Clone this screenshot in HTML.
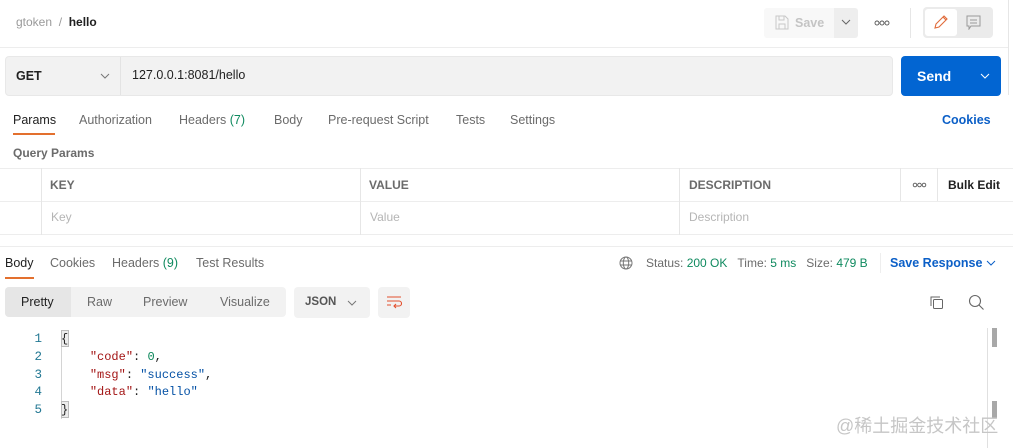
<!DOCTYPE html>
<html><head><meta charset="utf-8">
<style>
*{margin:0;padding:0;box-sizing:border-box}
body{width:1013px;height:448px;overflow:hidden;background:#fff;font-family:"Liberation Sans","Noto Sans CJK SC",sans-serif;font-size:12px;color:#6b6b6b;position:relative}
.a{position:absolute;white-space:nowrap}
.hl{position:absolute;background:#ededed;height:1px}
.vl{position:absolute;background:#e6e6e6;width:1px}
.mono{font-family:"Liberation Mono","DejaVu Sans Mono",monospace;font-size:12px}
.g{color:#0f8a5f}
</style></head><body>
<div class="a" style="left:16px;top:15px;font-size:12px;color:#9a9a9a">gtoken&nbsp;&nbsp;/&nbsp;&nbsp;<span style="color:#212121;font-weight:bold">hello</span></div>
<div class="hl" style="left:0;top:47px;width:1008px"></div>
<div class="vl" style="left:1008px;top:0;height:95px"></div>
<!-- save -->
<div class="a" style="left:764px;top:8px;width:70px;height:30px;background:#f8f8f8;border-radius:3px 0 0 3px"></div>
<svg class="a" style="left:775px;top:15px" width="14" height="15" viewBox="0 0 14 15"><path d="M1 1h9l3 3v10H1z M4 1v4h5V1 M4 14v-5h6v5" fill="none" stroke="#c8c8c8" stroke-width="1"/></svg>
<div class="a" style="left:795px;top:16px;color:#c4c4c4;font-size:12.5px;font-weight:bold">Save</div>
<div class="a" style="left:834px;top:8px;width:24px;height:30px;background:#eeeeee;border-radius:0 3px 3px 0"></div>
<svg class="a" style="left:841px;top:19px" width="10" height="6"><path d="M1 1l4 4 4-4" fill="none" stroke="#666" stroke-width="1"/></svg>
<svg class="a" style="left:874px;top:20px" width="16" height="6"><g fill="none" stroke="#555" stroke-width="0.9"><circle cx="3" cy="3" r="2"/><circle cx="8" cy="3" r="2"/><circle cx="13" cy="3" r="2"/></g></svg>
<div class="vl" style="left:910px;top:8px;height:30px"></div>
<div class="a" style="left:923px;top:7px;width:70px;height:31px;background:#ebebeb;border-radius:4px"></div>
<div class="a" style="left:925px;top:9px;width:32px;height:27px;background:#fff;border-radius:3px"></div>
<svg class="a" style="left:933px;top:15px" width="15" height="15"><path d="M2 13l1-4 8-8 3 3-8 8z M10 2l3 3" fill="none" stroke="#e06b3a" stroke-width="1.1"/></svg>
<svg class="a" style="left:966px;top:15px" width="15" height="15"><path d="M1 1h13v10H5l-2 3v-3H1z M4 5h7 M4 8h7" fill="none" stroke="#999" stroke-width="1"/></svg>
<!-- url bar -->
<div class="a" style="left:5px;top:56px;width:888px;height:40px;background:#f2f2f2;border:1px solid #e8e8e8;border-radius:4px"></div>
<div class="vl" style="left:120px;top:57px;height:38px;background:#e3e3e3"></div>
<div class="a" style="left:16px;top:69px;font-weight:bold;color:#212121;font-size:12.5px">GET</div>
<svg class="a" style="left:100px;top:73px" width="10" height="6"><path d="M1 1l4 4 4-4" fill="none" stroke="#777" stroke-width="1"/></svg>
<div class="a" style="left:132px;top:68px;color:#212121;font-size:12.5px">127.0.0.1:8081/hello</div>
<div class="a" style="left:901px;top:56px;width:100px;height:40px;background:#0265d2;border-radius:4px"></div>
<div class="a" style="left:917px;top:68px;color:#fff;font-weight:bold;font-size:14px">Send</div>
<svg class="a" style="left:980px;top:73px" width="10" height="6"><path d="M1 1l4 4 4-4" fill="none" stroke="#fff" stroke-width="1"/></svg>
<!-- tabs -->
<div class="a" style="left:13px;top:113px;color:#212121;font-size:12.5px">Params</div>
<div class="a" style="left:13px;top:133px;width:42px;height:2px;background:#e3702e"></div>
<div class="a" style="left:79px;top:113px;font-size:12.5px">Authorization</div>
<div class="a" style="left:179px;top:113px;font-size:12.5px">Headers <span class="g">(7)</span></div>
<div class="a" style="left:274px;top:113px;font-size:12.5px">Body</div>
<div class="a" style="left:328px;top:113px;font-size:12.5px">Pre-request Script</div>
<div class="a" style="left:456px;top:113px;font-size:12.5px">Tests</div>
<div class="a" style="left:510px;top:113px;font-size:12.5px">Settings</div>
<div class="a" style="left:942px;top:113px;color:#0b5fc7;font-weight:bold;font-size:12.5px">Cookies</div>
<div class="a" style="left:13px;top:146px;font-weight:bold;color:#6b6b6b;font-size:12px">Query Params</div>
<!-- table -->
<div class="hl" style="left:0;top:168px;width:1013px"></div>
<div class="hl" style="left:0;top:201px;width:1013px"></div>
<div class="hl" style="left:0;top:234px;width:1013px"></div>
<div class="vl" style="left:41px;top:168px;height:67px"></div>
<div class="vl" style="left:360px;top:168px;height:67px"></div>
<div class="vl" style="left:679px;top:168px;height:67px"></div>
<div class="vl" style="left:900px;top:168px;height:33px"></div>
<div class="vl" style="left:937px;top:168px;height:33px"></div>
<div class="a" style="left:50px;top:178px;font-weight:bold;font-size:12px">KEY</div>
<div class="a" style="left:369px;top:178px;font-weight:bold;font-size:12px">VALUE</div>
<div class="a" style="left:689px;top:178px;font-weight:bold;font-size:12px">DESCRIPTION</div>
<svg class="a" style="left:912px;top:182px" width="15" height="6"><g fill="none" stroke="#555" stroke-width="0.9"><circle cx="3" cy="3" r="1.8"/><circle cx="7.5" cy="3" r="1.8"/><circle cx="12" cy="3" r="1.8"/></g></svg>
<div class="a" style="left:948px;top:178px;font-weight:bold;color:#212121;font-size:12px">Bulk Edit</div>
<div class="a" style="left:51px;top:210px;color:#b5b5b5">Key</div>
<div class="a" style="left:370px;top:210px;color:#b5b5b5">Value</div>
<div class="a" style="left:689px;top:210px;color:#b5b5b5">Description</div>
<div class="hl" style="left:0;top:246px;width:1013px"></div>
<!-- response tabs -->
<div class="a" style="left:5px;top:256px;color:#212121;font-size:12.5px">Body</div>
<div class="a" style="left:5px;top:277px;width:29px;height:2px;background:#e3702e"></div>
<div class="a" style="left:50px;top:256px;font-size:12.5px">Cookies</div>
<div class="a" style="left:112px;top:256px;font-size:12.5px">Headers <span class="g">(9)</span></div>
<div class="a" style="left:196px;top:256px;font-size:12.5px">Test Results</div>
<svg class="a" style="left:619px;top:256px" width="14" height="14" viewBox="0 0 14 14"><circle cx="7" cy="7" r="6" fill="none" stroke="#777"/><ellipse cx="7" cy="7" rx="2.7" ry="6" fill="none" stroke="#777"/><path d="M1 5h12M1 9h12" stroke="#777"/></svg>
<div class="a" style="left:646px;top:256px;font-size:12px">Status: <span class="g">200 OK</span>&nbsp;&nbsp;&nbsp;Time: <span class="g">5 ms</span>&nbsp;&nbsp;&nbsp;Size: <span class="g">479 B</span></div>
<div class="vl" style="left:880px;top:253px;height:20px;background:#eee"></div>
<div class="a" style="left:890px;top:256px;color:#0b5fc7;font-weight:bold;font-size:12.5px">Save Response</div>
<svg class="a" style="left:986px;top:260px" width="10" height="6"><path d="M1 1l4 4 4-4" fill="none" stroke="#0b5fc7" stroke-width="1"/></svg>
<!-- segmented -->
<div class="a" style="left:5px;top:287px;width:281px;height:30px;background:#f2f2f2;border-radius:4px"></div>
<div class="a" style="left:5px;top:287px;width:66px;height:30px;background:#e6e6e6;border-radius:4px 0 0 4px"></div>
<div class="a" style="left:21px;top:295px;color:#212121;font-size:12.5px">Pretty</div>
<div class="a" style="left:87px;top:295px;font-size:12.5px">Raw</div>
<div class="a" style="left:143px;top:295px;font-size:12.5px">Preview</div>
<div class="a" style="left:220px;top:295px;font-size:12.5px">Visualize</div>
<div class="a" style="left:294px;top:287px;width:76px;height:31px;background:#f2f2f2;border-radius:4px"></div>
<div class="a" style="left:305px;top:296px;font-weight:bold;font-size:11.5px;color:#555">JSON</div>
<svg class="a" style="left:347px;top:300px" width="10" height="6"><path d="M1 1l4 4 4-4" fill="none" stroke="#777" stroke-width="1"/></svg>
<div class="a" style="left:378px;top:287px;width:32px;height:31px;background:#f2f2f2;border-radius:4px"></div>
<svg class="a" style="left:386px;top:295px" width="16" height="14"><path d="M1 2h14M1 6h12a2.5 2.5 0 0 1 0 5H8M10 9l-2 2 2 2M1 10h4" fill="none" stroke="#e3502e" stroke-width="1.1"/></svg>
<svg class="a" style="left:929px;top:295px" width="16" height="16"><path d="M2 11V2h9" fill="none" stroke="#666"/><rect x="4.5" y="4.5" width="9" height="9" rx="1" fill="none" stroke="#666"/></svg>
<svg class="a" style="left:968px;top:294px" width="17" height="17"><circle cx="7" cy="7" r="5.5" fill="none" stroke="#666" stroke-width="1.1"/><path d="M11 11l4.5 4.5" stroke="#666" stroke-width="1.1"/></svg>
<!-- code -->
<div class="a" style="left:61px;top:332px;width:7px;height:87px;border-left:1px solid #d4d4d4"></div>
<div class="a" style="left:61px;top:330px;width:8px;height:17px;background:#ececec;border:1px solid #bbb"></div>
<div class="a" style="left:61px;top:401px;width:8px;height:17px;background:#ececec;border:1px solid #bbb"></div>
<div class="a mono" style="left:33px;top:331px;line-height:17.8px;color:#237893;text-align:right;width:9px;font-size:12.5px">1<br>2<br>3<br>4<br>5</div>
<div class="a mono" style="left:61px;top:331px;line-height:17.8px;color:#212121">{<br>&nbsp;&nbsp;&nbsp;&nbsp;<span style="color:#a31515">"code"</span>: <span style="color:#098658">0</span>,<br>&nbsp;&nbsp;&nbsp;&nbsp;<span style="color:#a31515">"msg"</span>: <span style="color:#0451a5">"success"</span>,<br>&nbsp;&nbsp;&nbsp;&nbsp;<span style="color:#a31515">"data"</span>: <span style="color:#0451a5">"hello"</span><br>}</div>
<div class="vl" style="left:987px;top:328px;height:120px;background:#e0e0e0"></div>
<div class="a" style="left:992px;top:328px;width:5px;height:19px;background:#a8a8a8"></div>
<div class="a" style="left:992px;top:401px;width:5px;height:17px;background:#a8a8a8"></div>
<div class="a" style="left:836px;top:412px;font-size:18px;color:#c6c6c6">@稀土掘金技术社区</div>
</body></html>
